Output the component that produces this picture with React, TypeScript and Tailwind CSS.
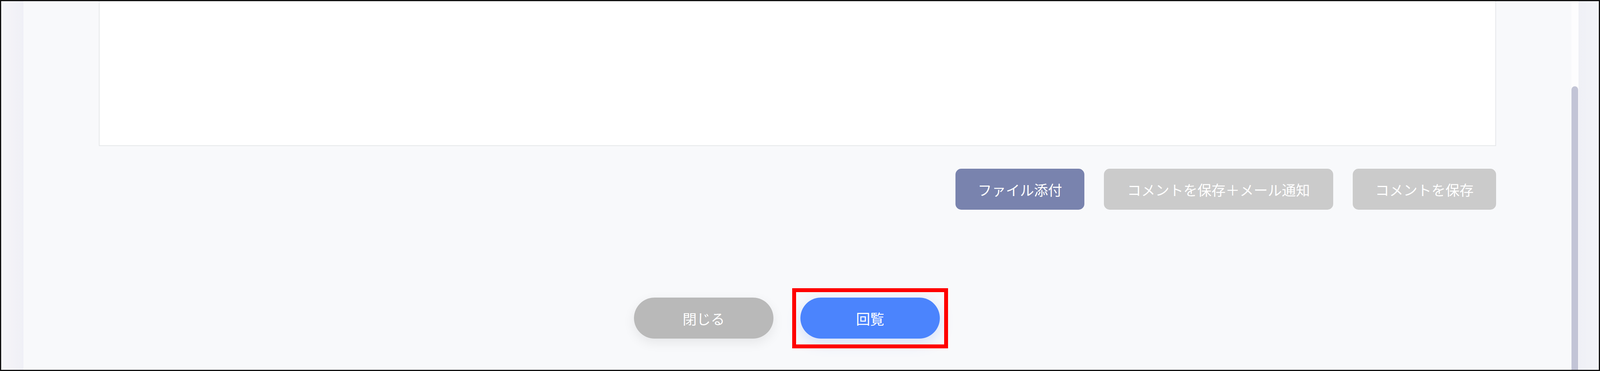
import React from "react";

const font = {
  fontFamily: '"Noto Sans CJK JP", "Noto Sans", sans-serif',
};

export default function App() {
  return (
    <div
      className="w-full h-[950px] border-[3px] border-[#111] flex overflow-hidden bg-[#f8f9fb] box-border"
      style={font}
    >
      <div className="w-[57px] shrink-0 bg-gradient-to-r from-[#f5f6fa] via-[#f3f2f7] to-[#eff0f6]" />
      <main className="flex-1 min-w-0 flex flex-col px-[193px]">
        <div className="h-[371px] shrink-0 bg-white border-x-2 border-b-2 border-[#e6e8ea]" />
        <div className="mt-[58px] flex justify-end gap-[50px]">
          <button className="w-[330px] h-[105px] shrink-0 rounded-[15px] bg-[#7983ae] text-white text-[36px] leading-none">
            ファイル添付
          </button>
          <button className="w-[587px] h-[105px] shrink-0 rounded-[15px] bg-[#cbcbcb] text-white text-[36px] leading-none">
            コメントを保存＋メール通知
          </button>
          <button className="w-[367px] h-[105px] shrink-0 rounded-[15px] bg-[#cbcbcb] text-white text-[36px] leading-none">
            コメントを保存
          </button>
        </div>
        <div className="mt-[225px] flex justify-center gap-[69px] pr-[54px]">
          <button className="w-[357px] h-[105px] shrink-0 rounded-full bg-[#b9b9b9] text-white text-[36px] leading-none shadow-[0_10px_30px_rgba(0,0,0,0.08)]">
            閉じる
          </button>
          <div className="relative shrink-0">
            <button className="w-[357px] h-[105px] rounded-full bg-[#4b84fd] text-white text-[36px] leading-none shadow-[0_10px_36px_rgba(75,132,253,0.22)]">
              回覧
            </button>
            <div className="absolute left-[-21px] right-[-21px] top-[-24px] bottom-[-25px] border-[10px] border-[#ff0000] pointer-events-none" />
          </div>
        </div>
      </main>
      <div className="w-[18px] shrink-0 bg-[#fdfdfe] flex flex-col pt-[218px]">
        <div className="flex-1 w-[17px] rounded-t-full bg-[#c2c4d6]" />
      </div>
      <div className="w-[52px] shrink-0 bg-gradient-to-r from-[#eff0f6] to-[#f3f4f8]" />
    </div>
  );
}
